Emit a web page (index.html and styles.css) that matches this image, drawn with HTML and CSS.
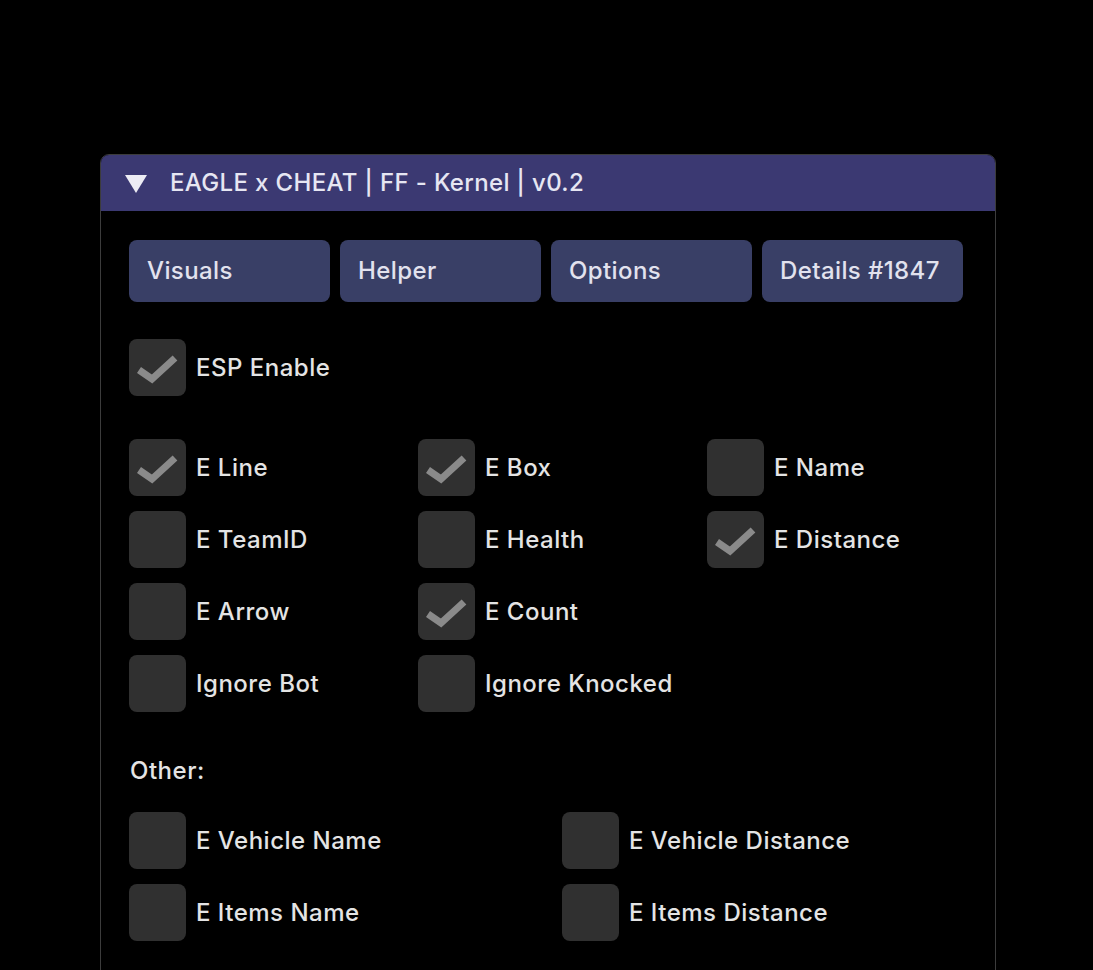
FILE: index.html
```html
<!DOCTYPE html>
<html>
<head>
<meta charset="utf-8">
<link rel="stylesheet" href="styles.css">
</head>
<body>
<div class="window">
  <div class="titlebar">
    <svg class="arrow" width="22" height="18" viewBox="0 0 22 18"><polygon points="0,0 22,0 11,18" fill="#ececf4"/></svg>
    <span class="title">EAGLE x CHEAT | FF - Kernel | v0.2</span>
  </div>
  <div class="content">
    <div class="tabs">
      <div class="tab">Visuals</div>
      <div class="tab">Helper</div>
      <div class="tab">Options</div>
      <div class="tab">Details #1847</div>
    </div>

    <div class="row single">
      <div class="item"><span class="box checked"></span><span class="label">ESP Enable</span></div>
    </div>

    <div class="grid3">
      <div class="item"><span class="box checked"></span><span class="label">E Line</span></div>
      <div class="item"><span class="box checked"></span><span class="label">E Box</span></div>
      <div class="item"><span class="box"></span><span class="label">E Name</span></div>
      <div class="item"><span class="box"></span><span class="label">E TeamID</span></div>
      <div class="item"><span class="box"></span><span class="label">E Health</span></div>
      <div class="item"><span class="box checked"></span><span class="label">E Distance</span></div>
      <div class="item"><span class="box"></span><span class="label">E Arrow</span></div>
      <div class="item"><span class="box checked"></span><span class="label">E Count</span></div>
      <div class="item"></div>
      <div class="item"><span class="box"></span><span class="label">Ignore Bot</span></div>
      <div class="item"><span class="box"></span><span class="label">Ignore Knocked</span></div>
    </div>

    <div class="section">Other:</div>

    <div class="grid2">
      <div class="item"><span class="box"></span><span class="label">E Vehicle Name</span></div>
      <div class="item"><span class="box"></span><span class="label">E Vehicle Distance</span></div>
      <div class="item"><span class="box"></span><span class="label">E Items Name</span></div>
      <div class="item"><span class="box"></span><span class="label">E Items Distance</span></div>
    </div>
  </div>
</div>
</body>
</html>
```
FILE: styles.css
```css
html, body {
  margin: 0;
  padding: 0;
  background: #000;
  overflow: hidden;
}
body {
  font-family: "Inter", "Noto Sans", sans-serif;
  font-weight: 500;
  color: #e4e4e4;
}
.window {
  margin: 154px 0 0 100px;
  width: 894px;
  height: 900px;
  border: 1px solid #3c3c3c;
  border-radius: 9px 9px 0 0;
  background: #000;
}
.titlebar {
  height: 56px;
  background: #3b3972;
  border-radius: 8px 8px 0 0;
  display: flex;
  align-items: center;
  padding-left: 24px;
}
.arrow {
  margin-top: 1px;
}
.title {
  margin-left: 23px;
  font-size: 24px;
  color: #e6e6f2;
  letter-spacing: 0.35px;
  margin-top: -1px;
}
.content {
  padding: 29px 0 0 28px;
}
.tabs {
  display: flex;
  gap: 10px;
}
.tab {
  width: 201px;
  height: 62px;
  box-sizing: border-box;
  background: #393f66;
  border-radius: 8px;
  display: flex;
  align-items: center;
  padding-left: 18px;
  padding-bottom: 2px;
  font-size: 24px;
  letter-spacing: 0.4px;
  color: #e2e2ee;
}
.row.single {
  margin-top: 37px;
}
.item {
  display: flex;
  align-items: center;
  height: 57px;
}
.box {
  width: 57px;
  height: 57px;
  flex: none;
  background: #303030;
  border-radius: 8px;
  position: relative;
}
.box.checked::after {
  content: "";
  position: absolute;
  left: 0;
  top: 0;
  width: 57px;
  height: 57px;
  background: url("data:image/svg+xml;utf8,<svg xmlns='http://www.w3.org/2000/svg' width='57' height='57' viewBox='0 0 57 57'><polyline points='10,31 23,40 46,19' fill='none' stroke='%238a8a8a' stroke-width='7' stroke-linejoin='miter'/></svg>") no-repeat;
}
.label {
  margin-left: 10px;
  font-size: 24px;
  letter-spacing: 0.5px;
  color: #e4e4e4;
  margin-top: -1px;
}
.grid3 {
  margin-top: 43px;
  display: grid;
  grid-template-columns: 289px 289px 289px;
  row-gap: 15px;
}
.section {
  margin-top: 44px;
  height: 30px;
  line-height: 30px;
  font-size: 24px;
  letter-spacing: 0.5px;
  margin-left: 1px;
}
.grid2 {
  margin-top: 26px;
  display: grid;
  grid-template-columns: 433px 433px;
  row-gap: 15px;
}
```
